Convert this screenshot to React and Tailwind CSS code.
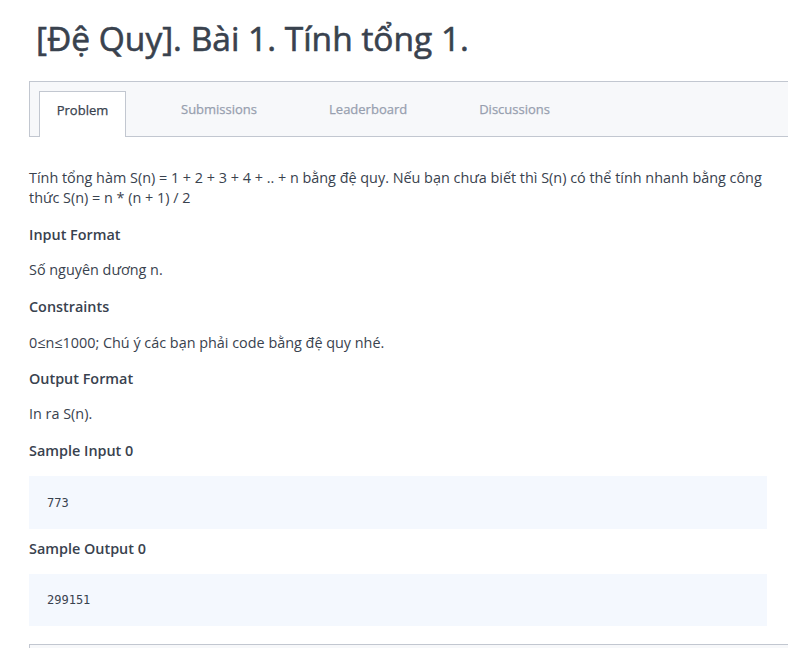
export default function App() {
  const tabs = ['Problem', 'Submissions', 'Leaderboard', 'Discussions'];
  const mono = { fontFamily: '"DejaVu Sans Mono", "Liberation Mono", monospace' };

  return (
    <div
      className="min-h-screen bg-white text-[#39424e] overflow-hidden"
      style={{ fontFamily: '"Open Sans", "Noto Sans", sans-serif' }}
    >
      <h1 className="pt-[18px] pl-[36px] text-[33.5px] leading-[40px] font-normal whitespace-nowrap [-webkit-text-stroke:0.6px_#39424e]">
        [Đệ Quy]. Bài 1. Tính tổng 1.
      </h1>

      <div className="ml-[29px] mt-[23px] h-[56px] border-t border-b border-l border-[#c2c7d0] bg-[#f7f8fa] flex items-end pl-[9px]">
        {tabs.map((tab, i) =>
          i === 0 ? (
            <div
              key={tab}
              className="h-[46px] -mb-px w-[87px] flex justify-center pt-[9px] bg-white border border-b-0 border-[#c2c7d0] text-[13px] text-[#39424e] [-webkit-text-stroke:0.25px_#39424e]"
            >
              {tab}
            </div>
          ) : (
            <div
              key={tab}
              className={`h-[45px] pt-[9px] text-[13px] text-[#979faf] [-webkit-text-stroke:0.25px_#979faf] ${
                i === 1 ? 'ml-[55px]' : 'ml-[72px]'
              }`}
            >
              {tab}
            </div>
          )
        )}
      </div>

      <div className="pl-[29px] pr-[21px] pt-[31px] text-[14.4px] leading-[20px]">
        <p>
          Tính tổng hàm S(n) = 1 + 2 + 3 + 4 + .. + n bằng đệ quy. Nếu bạn chưa biết thì S(n) có thể tính nhanh bằng công
          thức S(n) = n * (n + 1) / 2
        </p>

        <h3 className="mt-[17px] font-semibold">Input Format</h3>
        <p className="mt-[15px]">Số nguyên dương n.</p>

        <h3 className="mt-[17px] font-semibold">Constraints</h3>
        <p className="mt-[16px]">0≤n≤1000; Chú ý các bạn phải code bằng đệ quy nhé.</p>

        <h3 className="mt-[16px] font-semibold">Output Format</h3>
        <p className="mt-[15px]">In ra S(n).</p>

        <h3 className="mt-[17px] font-semibold">Sample Input 0</h3>
        <pre
          className="mt-[15px] h-[53px] bg-[#f4f8fe] pl-[18px] flex items-center text-[12px] text-[#39424e]"
          style={mono}
        >
          773
        </pre>

        <h3 className="mt-[10px] font-semibold">Sample Output 0</h3>
        <pre
          className="mt-[15px] h-[52px] bg-[#f4f8fe] pl-[18px] flex items-center text-[12px] text-[#39424e]"
          style={mono}
        >
          299151
        </pre>
      </div>

      <div className="ml-[29px] mt-[18px] h-[40px] border-t border-l border-[#c2c7d0] bg-[#f7f8fa]" />
    </div>
  );
}
